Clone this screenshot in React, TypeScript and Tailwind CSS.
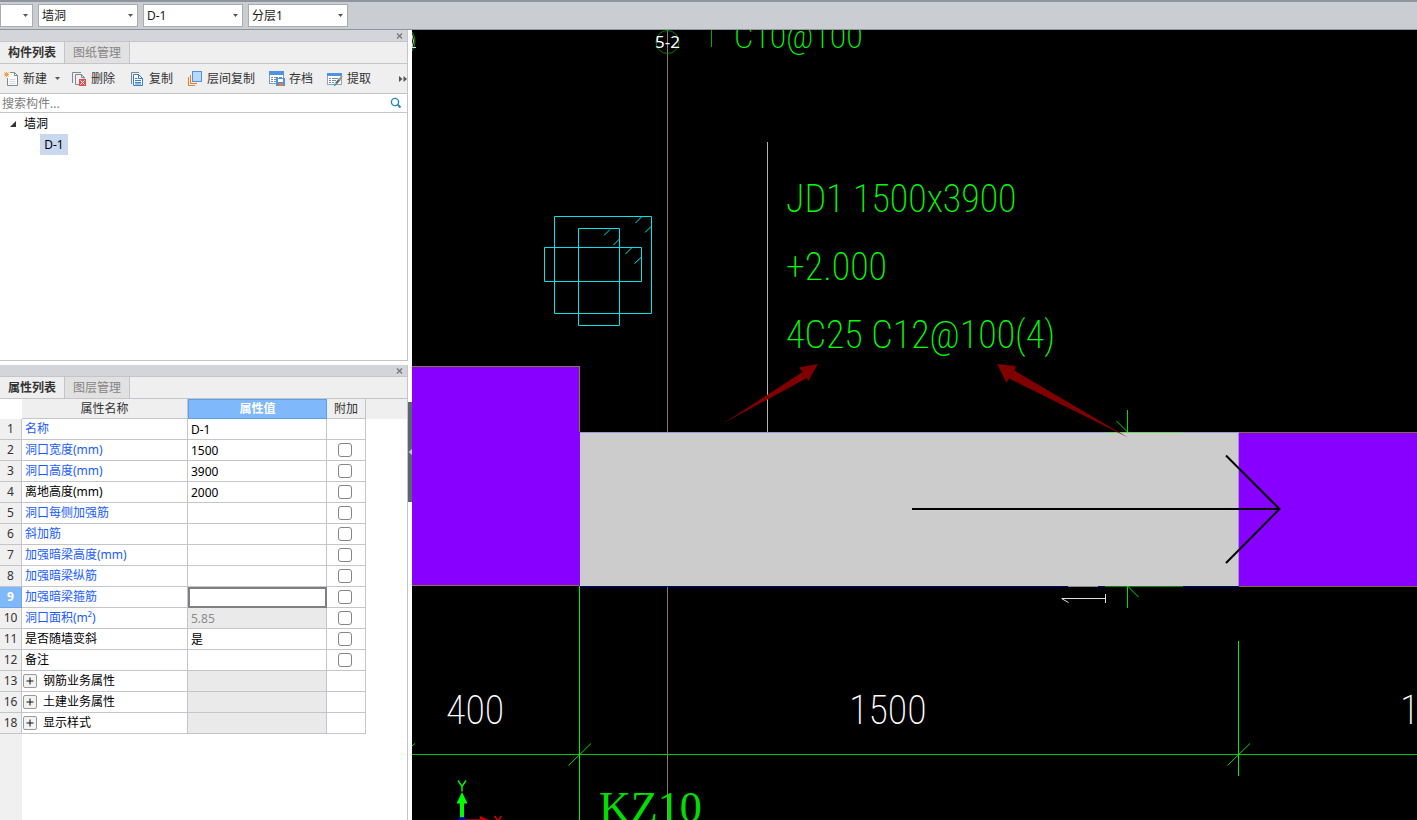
import type { ReactNode } from 'react';

function Caret({ className = '' }: { className?: string }) {
  return (
    <svg viewBox="0 0 5 3" className={`h-[3px] w-[5px] ${className}`} aria-hidden="true">
      <path d="M0 0h5L2.5 3z" fill="#555" />
    </svg>
  );
}

function Picker({ label, options, width }: { label: string; options: string[]; width: string }) {
  return (
    <div className={`relative flex h-[23px] items-center ${width}`}>
      <select
        aria-label={label}
        className="h-full w-full appearance-none border border-[#a9abb0] bg-white pr-4 pl-[3px] text-xs text-[#1a1a1a]"
      >
        {options.map((o) => (
          <option key={o}>{o}</option>
        ))}
      </select>
      <Caret className="pointer-events-none absolute right-[5px]" />
    </div>
  );
}

function PanelHeader({ tabs, name }: { tabs: [string, string]; name: string }) {
  return (
    <>
      <div className="flex h-3 items-center justify-end border-b border-[#c3c5ca] bg-[#d4d5da] pr-1">
        <button type="button" aria-label={`关闭${name}`} className="flex h-2 w-2 items-center justify-center">
          <svg viewBox="0 0 7 6" className="h-1.5 w-[7px]" aria-hidden="true">
            <path d="M1 .5l5 5M6 .5l-5 5" stroke="#77797c" strokeWidth="1.4" />
          </svg>
        </button>
      </div>
      <div role="tablist" className="flex h-[22px] border-b border-[#c3c5ca] bg-[#efefef] text-xs">
        <button type="button" role="tab" aria-selected="true" className="w-[65px] border-r border-[#c3c5ca] font-semibold text-[#333]">
          {tabs[0]}
        </button>
        <button type="button" role="tab" aria-selected="false" className="w-[65px] border-r border-[#c3c5ca] bg-[#e1e1e1] text-[#858585]">
          {tabs[1]}
        </button>
      </div>
    </>
  );
}

function ToolButton({ label, children }: { label: string; children: ReactNode }) {
  return (
    <button type="button" className="flex shrink-0 items-center gap-1 whitespace-nowrap">
      <svg viewBox="0 0 16 16" className="h-4 w-4" fill="none" aria-hidden="true">
        {children}
      </svg>
      {label}
    </button>
  );
}

function Toolbar() {
  return (
    <div className="flex h-[30px] items-center border-b border-[#c3c5ca] bg-[#efefef] pl-[3px] text-xs text-[#333]">
      <ToolButton label="新建">
        <path d="M7 1.500h4.500l3 3v10h-10V7" fill="#fafafa" stroke="#7c8a96" />
        <path d="M11.500 1.500v3h3" stroke="#7c8a96" />
        <path d="M6.500 8.500h6M6.500 10.500h6M6.500 12.500h6" stroke="#d5d9de" />
        <path d="M1.500 1.500l4 4M5.500 1.500l-4 4M3.500 1v5M1 3.500h5" stroke="#f2a43a" />
      </ToolButton>
      <button type="button" aria-label="新建选项" className="mr-1 flex h-5 w-5 items-center justify-center">
        <Caret />
      </button>
      <div className="flex gap-3.5">
        <ToolButton label="删除">
          <path d="M1.500 12V1.500H10" stroke="#7c8a96" />
          <path d="M8 13.500H4.500v-10h6l2.500 2.500V8" stroke="#7c8a96" />
          <path d="M10.500 3.500v3h3" stroke="#7c8a96" />
          <rect x="8" y="8" width="7" height="7" fill="#d9534f" />
          <path d="M9.500 9.500l4 4M13.500 9.500l-4 4" stroke="#fff" />
        </ToolButton>
        <ToolButton label="复制">
          <path d="M2.500 13V1.500H10" stroke="#7c8a96" />
          <path d="M4.500 3.500h5l4 4v7h-9z" fill="#fff" stroke="#3a80cf" />
          <path d="M9.500 3.500v4h4M6 7.500h2.500M6 9.500h6M6 11.500h6M6 13h6" stroke="#3a80cf" />
        </ToolButton>
        <ToolButton label="层间复制">
          <path d="M1.500 6v8.500H8" stroke="#ee7c24" />
          <path d="M3.500 4v8.500H10" stroke="#ee7c24" />
          <rect x="5.500" y=".5" width="9" height="10" fill="#b9d7fb" stroke="#4d93e0" />
        </ToolButton>
        <ToolButton label="存档">
          <rect x=".5" y="1.500" width="14" height="11" fill="#fff" stroke="#6f9fcf" />
          <rect y="0" width="15" height="4" fill="#4d93e0" />
          <path d="M2 6.500h2M5 6.500h4M10 6.500h3M2 8.500h2M2 10.500h2M5 8.500h2M5 10.500h2" stroke="#7c8a96" />
          <rect x="7" y="7" width="9" height="8" fill="#4d93e0" />
          <rect x="9" y="8" width="5" height="3" fill="#fff" />
          <rect x="10" y="12" width="4" height="3" fill="#ee7c24" />
        </ToolButton>
        <ToolButton label="提取">
          <rect x=".5" y="2.500" width="14" height="11" fill="#fff" stroke="#8aa5bd" />
          <rect y="2" width="15" height="3" fill="#4d93e0" />
          <path d="M2 7.500h2M5 7.500h6M2 9.500h2M5 9.500h4M2 11.500h2M5 11.500h2" stroke="#7c8a96" />
          <path d="M9 12.500l4-4.500" stroke="#666" strokeWidth="2.500" />
          <path d="M12 9l3-4" stroke="#999" strokeWidth="2" />
          <path d="M7 14.500l2-1.500" stroke="#1ca6c9" strokeWidth="2" />
        </ToolButton>
      </div>
      <button type="button" aria-label="更多工具" className="ml-auto flex h-5 w-2 items-center justify-center">
        <svg viewBox="0 0 8 6" className="h-1.5 w-2" aria-hidden="true">
          <path d="M0 0l3.500 3L0 6zM4.500 0L8 3 4.500 6z" fill="#555" />
        </svg>
      </button>
    </div>
  );
}

function ComponentPanel() {
  return (
    <section className="flex h-[331px] shrink-0 flex-col border-r border-b border-[#c3c5ca]">
      <PanelHeader tabs={['构件列表', '图纸管理']} name="构件列表" />
      <Toolbar />
      <div className="flex h-[19px] shrink-0 items-center border-b border-[#c3c5ca] pr-[5px]">
        <input
          aria-label="搜索构件"
          placeholder="搜索构件..."
          className="h-full min-w-0 flex-1 pl-0.5 text-xs outline-none placeholder:text-[#7d7d7d]"
        />
        <button type="button" aria-label="搜索">
          <svg viewBox="0 0 12 12" className="h-3 w-3" fill="none" stroke="#2a86bf" aria-hidden="true">
            <circle cx="5" cy="5" r="3.600" strokeWidth="1.400" />
            <path d="M7.800 7.800L10.500 10.500" strokeWidth="2" />
          </svg>
        </button>
      </div>
      <ul role="tree" className="text-xs text-black">
        <li role="treeitem" aria-expanded="true" aria-selected="false">
          <div className="flex h-[21px] items-center gap-2 pl-[10px]">
            <svg viewBox="0 0 6 6" className="h-1.5 w-1.5" aria-hidden="true">
              <path d="M6 0v6H0z" fill="#333" />
            </svg>
            墙洞
          </div>
          <ul role="group">
            <li role="treeitem" aria-selected="true" className="ml-10 flex h-[21px] w-7 items-center justify-center bg-[#c8d8ef]">
              D-1
            </li>
          </ul>
        </li>
      </ul>
    </section>
  );
}

type Property = {
  no: number;
  name: string;
  value?: string;
  tone?: 'link' | 'plain' | 'group';
  check?: boolean;
  locked?: boolean;
};

const properties: Property[] = [
  { no: 1, name: '名称', value: 'D-1', tone: 'link' },
  { no: 2, name: '洞口宽度(mm)', value: '1500', tone: 'link', check: true },
  { no: 3, name: '洞口高度(mm)', value: '3900', tone: 'link', check: true },
  { no: 4, name: '离地高度(mm)', value: '2000', check: true },
  { no: 5, name: '洞口每侧加强筋', tone: 'link', check: true },
  { no: 6, name: '斜加筋', tone: 'link', check: true },
  { no: 7, name: '加强暗梁高度(mm)', tone: 'link', check: true },
  { no: 8, name: '加强暗梁纵筋', tone: 'link', check: true },
  { no: 9, name: '加强暗梁箍筋', tone: 'link', check: true },
  { no: 10, name: '洞口面积(m²)', value: '5.85', tone: 'link', check: true, locked: true },
  { no: 11, name: '是否随墙变斜', value: '是', check: true },
  { no: 12, name: '备注', check: true },
  { no: 13, name: '钢筋业务属性', tone: 'group', locked: true },
  { no: 16, name: '土建业务属性', tone: 'group', locked: true },
  { no: 18, name: '显示样式', tone: 'group', locked: true },
];

function PropertyRow({ row }: { row: Property }) {
  const active = row.no === 9;
  return (
    <tr className="h-[21px]">
      <th
        scope="row"
        className={
          active
            ? 'border-r border-b border-[#6ea6e6] bg-[#7fb9fb] p-0 font-bold text-white'
            : 'border-r border-b border-[#c3c5ca] bg-[#f0f0f0] p-0 font-normal text-[#333]'
        }
      >
        {row.no}
      </th>
      <td className={`border-r border-b border-[#c3c5ca] p-0 ${row.tone === 'link' ? 'text-[#1a5cff]' : 'text-black'}`}>
        {row.tone === 'group' ? (
          <div className="flex items-center gap-1.5 pl-px">
            <button
              type="button"
              aria-label={`展开${row.name}`}
              className="flex h-3.5 w-3.5 items-center justify-center rounded-[2px] border border-[#999] bg-[#f3f3f3]"
            >
              <svg viewBox="0 0 8 8" className="h-2 w-2" aria-hidden="true">
                <path d="M4 .5v7M.5 4h7" stroke="#111" />
              </svg>
            </button>
            {row.name}
          </div>
        ) : (
          <span className="pl-[3px]">{row.name}</span>
        )}
      </td>
      <td
        className={
          active
            ? 'border-r border-b border-[#c3c5ca] p-0 outline-2 -outline-offset-2 outline-[#808080]'
            : row.locked
              ? 'border-r border-b border-[#c3c5ca] bg-[#eaeaea] p-0'
              : 'border-r border-b border-[#c3c5ca] p-0'
        }
      >
        {row.tone !== 'group' && (
          <input
            aria-label={row.name}
            defaultValue={row.value}
            readOnly={row.locked}
            className={`block h-5 w-full bg-transparent pl-[3px] text-xs outline-none ${row.locked ? 'text-[#8c8c8c]' : 'text-black'}`}
          />
        )}
      </td>
      <td className="border-r border-b border-[#c3c5ca] p-0">
        {row.check && (
          <input
            type="checkbox"
            aria-label={`附加${row.name}`}
            className="ml-[11px] block h-3.5 w-3.5 appearance-none rounded-[3px] border border-[#858585] bg-white checked:bg-[#7fb9fb]"
          />
        )}
      </td>
    </tr>
  );
}

function PropertyPanel() {
  return (
    <section className="flex min-h-0 flex-1 flex-col border-r border-[#c3c5ca]">
      <PanelHeader tabs={['属性列表', '图层管理']} name="属性列表" />
      <div className="flex bg-[linear-gradient(#efefef,#efefef)] bg-[length:100%_20px] bg-no-repeat">
        <table className="w-[366px] table-fixed border-separate border-spacing-0 bg-white text-xs">
          <colgroup>
            <col className="w-[22px]" />
            <col className="w-[166px]" />
            <col className="w-[139px]" />
            <col className="w-[39px]" />
          </colgroup>
          <thead>
            <tr className="h-5 text-[#333]">
              <td className="bg-white p-0" />
              <th scope="col" className="border-r border-b border-[#c3c5ca] bg-[#efefef] p-0 font-normal">属性名称</th>
              <th scope="col" className="border border-[#5f9fe6] bg-[#7fb9fb] p-0 font-semibold text-white">属性值</th>
              <th scope="col" className="border-r border-b border-[#c3c5ca] bg-[#efefef] p-0 font-normal">附加</th>
            </tr>
          </thead>
          <tbody>
            {properties.map((row) => (
              <PropertyRow key={row.no} row={row} />
            ))}
          </tbody>
        </table>
      </div>
      <div className="w-[22px] flex-1 bg-[#f0f0f0]" />
    </section>
  );
}

function Drawing() {
  return (
    <svg
      viewBox="412 30 1005 790"
      preserveAspectRatio="xMinYMin slice"
      className="h-full w-full"
      fill="none"
      role="img"
      aria-label="墙洞平面图"
    >
      {/* axis and leader lines */}
      <g shapeRendering="crispEdges">
        <path d="M667.500 30V820" stroke="#8c7474" />
        <path d="M767.500 142V432" stroke="#b4b4b4" />
        <path d="M579.500 586V820M1238.500 641V776" stroke="#00f000" />
        <path d="M412 754.500H1417" stroke="#00c800" />
      </g>
      <path d="M568.500 765.500L591 743.500M1227.500 765.500L1250 743.500M412 746L415 743.500" stroke="#00e000" />

      {/* columns and wall */}
      <g shapeRendering="crispEdges">
        <rect x="412" y="366" width="168" height="220" fill="#8800ff" />
        <path d="M412 366.500H579.500V432M412 585.500H579" stroke="#8a7a3c" />
        <rect x="580" y="432" width="659" height="154" fill="#cccccc" />
        <path d="M580 432.500H1239" stroke="#9a9ad0" />
        <path d="M580 586.500H1239" stroke="#000078" />
        <rect x="1239" y="432" width="178" height="154" fill="#8800ff" />
        <path d="M1238.500 432V586" stroke="#a08cd8" />
        <path d="M1239 432.500H1417M1239 586.500H1417" stroke="#8a6a3c" />
        <path d="M1105 432.500H1183" stroke="#70d070" />
        <path d="M1105 586.500H1183" stroke="#008800" />
        <path d="M1068 586.500H1098" stroke="#888" />
      </g>

      {/* gap markers */}
      <path d="M1127.500 410V432M1116.500 421L1127.500 432M1127.500 586V608M1127.500 586L1138.500 597" stroke="#00e000" />
      <path d="M1062 598.500H1105M1105.500 594V603M1061.500 598.500L1068.500 602.500" stroke="#e0e0e0" />

      {/* direction arrow */}
      <path d="M912 509H1279M1226 455.500L1279.500 509L1226 563" stroke="#000" strokeWidth="2" />

      {/* section symbol */}
      <g stroke="#00e6e6">
        <path d="M554.500 216.500H651.500V313.500H554.500zM578.500 228.500H619.500V325.500H578.500zM544.500 247.500H641.500V281.500H544.500z" />
        <path d="M635.500 223L641.500 217M645 232.500L651 226.500M604 235.500L610 229.500M613.500 245L619.500 239M625.500 254L631.500 248M634.500 263.500L641 257.500" />
      </g>

      {/* callout arrows */}
      <path d="M818 364L799 367.500L802.500 372L723 423.500L807 378L808 381.500zM997 364L1016 366L1014.500 370.500L1128 437.500L1009 378.500L1006.500 383z" fill="#800000" />

      {/* annotations */}
      <g className="font-['Roboto_Condensed',sans-serif] text-[38px] font-extralight" fill="#00ff00">
        <text x="786" y="212">JD1 1500x3900</text>
        <text x="786" y="280">+2.000</text>
        <text x="786" y="348">4C25 C12@100(4)</text>
      </g>
      <text x="734" y="48" className="font-['Roboto_Condensed',sans-serif] text-[34px] font-extralight" fill="#00ff00">C10@100</text>
      <path d="M711.500 30V47" stroke="#00a800" />
      <g className="font-['Roboto_Condensed',sans-serif] text-[40px] font-extralight" fill="#ffffff">
        <text x="446" y="724">400</text>
        <text x="849" y="724">1500</text>
        <text x="1400" y="724">1</text>
      </g>
      <text x="599" y="822" className="font-['Liberation_Serif',serif] text-[44px]" fill="#00e000">KZ10</text>

      {/* axis bubbles */}
      <circle cx="667.500" cy="42" r="11.500" stroke="#0a7a0a" />
      <path d="M412 32Q418 41 412 51" stroke="#0a9a0a" />
      <text x="667.500" y="48" textAnchor="middle" className="font-['Noto_Sans',sans-serif] text-[17px]" fill="#ffffff">5-2</text>
      <path d="M412 35Q415 41 412 47.500H416" stroke="#ddd" />

      {/* coordinate origin */}
      <path d="M462 792L467.500 803.500H464V818H460V803.500H456.500z" fill="#00ff00" />
      <path d="M480 816L489 820H480z" fill="#cc0000" />
      <path d="M466 820H482" stroke="#990000" strokeWidth="2" />
      <circle cx="462" cy="822" r="5" fill="#0000bb" />
      <path d="M458 780.500L462 786.500L466 780.500M462 786V791.500" stroke="#00f000" strokeWidth="1.500" />
      <path d="M494.500 816L498 821L501.500 816" stroke="#dd0000" strokeWidth="1.500" />
    </svg>
  );
}

export default function App() {
  return (
    <div className="flex h-screen flex-col overflow-hidden bg-white font-['Noto_Sans','Noto_Sans_CJK_SC',sans-serif]">
      <header className="flex h-[30px] shrink-0 items-center gap-[5px] border-t-2 border-b border-t-[#8f959c] border-b-[#8f959c] bg-[#cacdd2]">
        <Picker label="构件大类" options={['']} width="w-[33px]" />
        <Picker label="构件类型" options={['墙洞']} width="w-[100px]" />
        <Picker label="构件名称" options={['D-1']} width="w-[100px]" />
        <Picker label="分层" options={['分层1']} width="w-[100px]" />
      </header>
      <div className="flex min-h-0 flex-1">
        <aside className="flex w-[408px] shrink-0 flex-col gap-1">
          <ComponentPanel />
          <PropertyPanel />
        </aside>
        <div className="flex w-1 shrink-0 flex-col bg-white pt-[372px]">
          <button type="button" aria-label="收起面板" className="flex h-[100px] w-1 items-center justify-center bg-[#5c656e]">
            <svg viewBox="0 0 4 6" className="h-1.5 w-1" aria-hidden="true">
              <path d="M4 0v6L.5 3z" fill="#c3c7cb" />
            </svg>
          </button>
        </div>
        <main className="min-w-0 flex-1 overflow-hidden bg-black">
          <Drawing />
        </main>
      </div>
    </div>
  );
}
